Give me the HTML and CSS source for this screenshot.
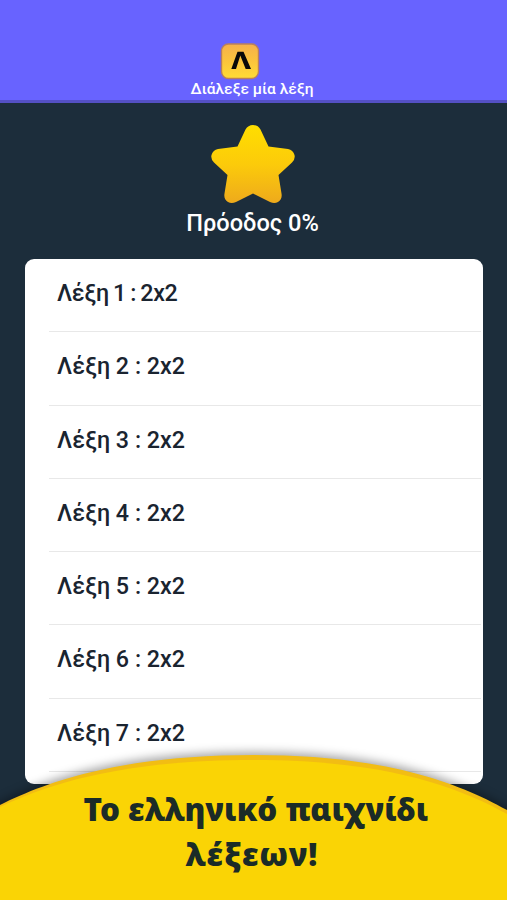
FILE: index.html
```html
<!DOCTYPE html>
<html lang="el">
<head>
    <meta charset="UTF-8">
    <meta name="viewport" content="width=device-width, initial-scale=1.0">
    <title>Διάλεξε μία λέξη</title>
    <link rel="stylesheet" href="styles.css">
</head>
<body>
    <header class="topbar">
        <svg class="logo" width="40" height="38" viewBox="0 0 40 38">
            <defs>
                <linearGradient id="tile" x1="0" y1="0" x2="0" y2="1">
                    <stop offset="0" stop-color="#f5b04c"/>
                    <stop offset="0.5" stop-color="#fbc43c"/>
                    <stop offset="1" stop-color="#ffdc35"/>
                </linearGradient>
            </defs>
            <rect x="1.5" y="2" width="37" height="34.5" rx="7" fill="url(#tile)" stroke="#b9805c" stroke-width="1.4"/>
            <path d="M11.300 27L17.500 9.700H23.500L31 27H25.700L20.300 13.500L16 27Z" fill="#090909"/>
        </svg>
        <div class="subtitle">Διάλεξε μία λέξη</div>
    </header>

    <section class="progress">
        <svg class="star" width="86" height="80" viewBox="0 0 86 80">
            <defs>
                <linearGradient id="gold" x1="0" y1="0" x2="0" y2="1">
                    <stop offset="0" stop-color="#ffde00"/>
                    <stop offset="0.5" stop-color="#fccb0a"/>
                    <stop offset="1" stop-color="#eeaa1c"/>
                </linearGradient>
            </defs>
            <path fill="url(#gold)" d="M35.500 5.500Q38 1 43 1Q48 1 50.500 5.500L58.500 22.500L78 25Q83 26 84.500 31Q85.500 35 82 38.500L68.500 51L71.500 69.500Q72.500 75 68 78Q64.500 80 60 78L43 69.500L26 78Q21.500 80 18 78Q13.500 75 14.500 69.500L17.500 51L4 38.500Q0.500 35 1.500 31Q3 26 8 25L27.500 22.500Z"/>
        </svg>
        <div class="progress-text">Πρόοδος 0%</div>
    </section>

    <ul class="words">
        <li class="first">Λέξη 1 : 2x2</li>
        <li>Λέξη 2 : 2x2</li>
        <li>Λέξη 3 : 2x2</li>
        <li>Λέξη 4 : 2x2</li>
        <li>Λέξη 5 : 2x2</li>
        <li>Λέξη 6 : 2x2</li>
        <li>Λέξη 7 : 2x2</li>
    </ul>

    <footer class="banner">
        <svg class="hill" width="507" height="170" viewBox="0 0 507 170">
            <path class="hill-edge" d="M-20 86L0 75C50 50 125 25 254 25C383 25 457 52 507 80L527 91V190H-20Z"/>
            <path class="hill-front" d="M-20 88L0 77C50 53 125 30 254 30C383 30 457 56 507 84L527 95V190H-20Z"/>
        </svg>
        <h1 class="slogan">Το ελληνικό παιχνίδι<br><span class="line2">λέξεων!</span></h1>
    </footer>
</body>
</html>
```
FILE: styles.css
```css
body {
    margin: 0;
    height: 900px;
    position: relative;
    overflow: hidden;
    background-color: #1c2d3b;
    font-family: Roboto, "Open Sans", sans-serif;
}
.topbar {
    box-sizing: border-box;
    height: 103px;
    padding-top: 42px;
    background-color: #6863ff;
    border-bottom: 3px solid #5450c4;
    text-align: center;
}
.logo {
    display: block;
    margin: 0 auto 0 220px;
}
.subtitle {
    margin-top: -2px;
    padding-right: 3px;
    font-size: 15.5px;
    font-weight: 500;
    line-height: 22px;
    color: white;
}
.progress {
    padding-top: 21px;
    text-align: center;
}
.star {
    display: block;
    margin: 0 auto 0 210px;
}
.progress-text {
    margin-top: 4px;
    padding-right: 2px;
    font-size: 23.6px;
    font-weight: 500;
    line-height: 30px;
    color: white;
}
.words {
    box-sizing: border-box;
    list-style: none;
    width: 458px;
    height: 525px;
    margin: 21px 0 0 25px;
    padding: 0 2px 0 24px;
    background-color: white;
    border-radius: 9px;
    overflow: hidden;
}
.words li {
    box-sizing: border-box;
    height: 73.3px;
    padding: 19px 0 0 8px;
    border-bottom: 1px solid #e8e8e8;
    font-size: 23.3px;
    font-weight: 500;
    line-height: 30px;
    color: #1a2430;
}
.words .first {
    letter-spacing: -0.3px;
    word-spacing: -1.3px;
}
.banner {
    position: absolute;
    left: 0;
    bottom: 0;
    width: 507px;
    height: 170px;
}
.hill {
    position: absolute;
    left: 0;
    top: 0;
}
.hill-edge {
    fill: #f2bd13;
    filter: drop-shadow(0 -3px 5px rgba(0, 0, 0, 0.35));
}
.hill-front {
    fill: #fad405;
}
.slogan {
    position: relative;
    margin: 0;
    padding: 56px 0 0 5px;
    text-align: center;
    font-family: "Noto Sans", "Open Sans", sans-serif;
    font-size: 31.4px;
    font-weight: 900;
    line-height: 45px;
    color: #1b2b27;
}
.line2 {
    margin-right: 8px;
    letter-spacing: 1px;
}
```
